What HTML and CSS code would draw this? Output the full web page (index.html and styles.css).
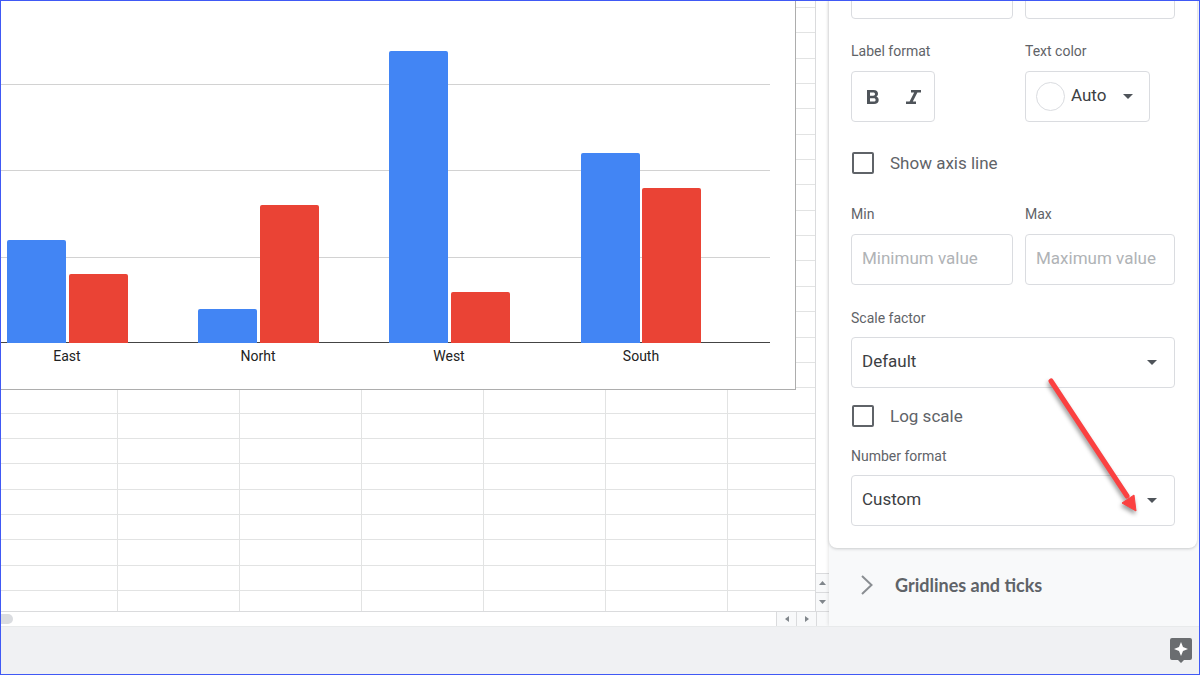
FILE: index.html
```html
<!DOCTYPE html>
<html lang="en">
<head>
<meta charset="utf-8">
<title>Chart editor</title>
<link rel="stylesheet" href="styles.css">
</head>
<body>
<div class="workspace">
  <main class="sheet">
    <div class="cells">
      <div class="rows">
        <i></i><i></i><i></i><i></i><i></i><i></i><i></i><i></i><i></i><i></i><i></i><i></i>
        <i></i><i></i><i></i><i></i><i></i><i></i><i></i><i></i><i></i><i></i><i></i><i></i>
      </div>
      <div class="chart">
        <svg class="plot" width="794" height="388" role="img" aria-label="Column chart by region">
          <g class="gridlines">
            <path d="M0 83.5H769M0 169.5H769M0 256.5H769"/>
          </g>
          <path class="axis" d="M0 341.500H769"/>
          <g class="first">
            <path d="M6 342V241q0-2 2-2h55q2 0 2 2V342z"/>
            <path d="M197 342V310q0-2 2-2h55q2 0 2 2V342z"/>
            <path d="M388 342V52q0-2 2-2h55q2 0 2 2V342z"/>
            <path d="M580 342V154q0-2 2-2h55q2 0 2 2V342z"/>
          </g>
          <g class="second">
            <path d="M68 342V275q0-2 2-2h55q2 0 2 2V342z"/>
            <path d="M259 342V206q0-2 2-2h55q2 0 2 2V342z"/>
            <path d="M450 342V293q0-2 2-2h55q2 0 2 2V342z"/>
            <path d="M641 342V189q0-2 2-2h55q2 0 2 2V342z"/>
          </g>
          <g class="categories">
            <text x="66" y="360">East</text>
            <text x="257" y="360">Norht</text>
            <text x="448" y="360">West</text>
            <text x="640" y="360">South</text>
          </g>
        </svg>
      </div>
    </div>
    <div class="vscroll">
      <button aria-label="Scroll up"><svg width="7" height="4"><path d="M0 4L3.500 0L7 4z"/></svg></button>
      <button aria-label="Scroll down"><svg width="7" height="4"><path d="M0 0L3.500 4L7 0z"/></svg></button>
    </div>
    <div class="hscroll">
      <span class="thumb"></span>
      <button aria-label="Scroll left"><svg width="4" height="6"><path d="M4 0L0 3L4 6z"/></svg></button>
      <button aria-label="Scroll right"><svg width="4" height="6"><path d="M0 0L4 3L0 6z"/></svg></button>
    </div>
    <div class="corner"></div>
  </main>

  <aside class="sidebar">
    <section class="card">
      <div class="pair">
        <select class="box" aria-label="Label font"><option></option></select>
        <select class="box" aria-label="Label font size"><option></option></select>
      </div>
      <div class="pair styles">
        <div class="field">
          <span class="label" id="lf">Label format</span>
          <div class="box format" role="group" aria-labelledby="lf">
            <button class="bold" aria-label="Bold"><svg width="12" height="14" viewBox="0 0 12 14"><path fill-rule="evenodd" d="M0 0H6.500C9.500 0 11 1.500 11 3.700C11 5 10.300 6.100 9.200 6.600C10.700 7 11.700 8.300 11.700 10C11.700 12.600 9.800 14 7 14H0zM3 2.500V5.700H6.200C7.400 5.700 8 5.100 8 4.100C8 3.100 7.400 2.500 6.200 2.500zM3 8.200V11.500H6.700C8 11.500 8.600 10.900 8.600 9.900C8.600 8.800 8 8.200 6.700 8.200z"/></svg></button>
            <button class="italic" aria-label="Italic"><svg width="15" height="14" viewBox="0 0 15 14"><path d="M5 0H15V2.400H11.400L6.800 11.600H10V14H0V11.600H3.600L8.200 2.400H5z"/></svg></button>
          </div>
        </div>
        <div class="field">
          <span class="label" id="tc">Text color</span>
          <button class="box color" aria-labelledby="tc auto"><span class="swatch"></span><span class="value" id="auto">Auto</span><svg width="10" height="5"><path d="M0 0H10L5 5z"/></svg></button>
        </div>
      </div>
      <label class="check"><input type="checkbox">Show axis line</label>
      <div class="pair range">
        <div class="field">
          <label class="label" for="min">Min</label>
          <input class="box" id="min" type="text" placeholder="Minimum value">
        </div>
        <div class="field">
          <label class="label" for="max">Max</label>
          <input class="box" id="max" type="text" placeholder="Maximum value">
        </div>
      </div>
      <div class="field scale">
        <label class="label" for="scale">Scale factor</label>
        <div class="drop"><select class="box" id="scale"><option>Default</option></select><svg width="10" height="5"><path d="M0 0H10L5 5z"/></svg></div>
      </div>
      <label class="check log"><input type="checkbox">Log scale</label>
      <div class="field number">
        <label class="label" for="number">Number format</label>
        <div class="drop"><select class="box" id="number"><option>Custom</option></select><svg width="10" height="5"><path d="M0 0H10L5 5z"/></svg></div>
      </div>
    </section>
    <button class="accordion"><svg width="12" height="20" viewBox="0 0 12 20"><path d="M1 1L10.500 10L1 19"/></svg>Gridlines and ticks</button>
    <svg class="arrow" width="110" height="150" viewBox="0 0 110 150">
      <path class="shaft" d="M12 10L88 125"/>
      <path class="head" d="M97 140L83 132L95 124z"/>
    </svg>
  </aside>
</div>
<footer class="bottom">
  <button aria-label="Explore"><svg width="22" height="25" viewBox="0 0 22 25"><path class="bubble" d="M2 0H20Q22 0 22 2V20Q22 22 20 22H14L11 25L8 22H2Q0 22 0 20V2Q0 0 2 0z"/><path class="star" d="M11 4L13 9L18 11L13 13L11 18L9 13L4 11L9 9z"/></svg></button>
</footer>
</body>
</html>
```
FILE: styles.css
```css
* { box-sizing: border-box; }

body {
  margin: 0;
  height: 100vh;
  display: flex;
  flex-direction: column;
  border: 1px solid #4059f5;
  background: #fff;
  color: #3c4043;
  font-family: Roboto, "Liberation Sans", sans-serif;
  overflow: hidden;
}

button {
  margin: 0;
  padding: 0;
  border: 0;
  background: none;
  color: inherit;
  font: inherit;
}

svg { display: block; }

.workspace {
  flex: 1;
  min-height: 0;
  display: grid;
  grid-template-columns: 1fr 370px;
  grid-template-rows: 100%;
}

/* Spreadsheet */
.sheet {
  display: grid;
  grid-template-columns: 1fr 13px;
  grid-template-rows: 1fr 14px;
  min-width: 0;
}

.cells {
  position: relative;
  overflow: hidden;
  border-right: 1px solid #dadbdd;
  border-bottom: 1px solid #dadbdd;
  background: linear-gradient(to right, #e2e3e3 1px, #fff 1px) 116px 0 / 122px 100%;
}

.rows {
  height: 100%;
  display: grid;
  grid-template-rows: 7px repeat(23, 1fr);
  padding-bottom: 20px;
}

.rows i { border-bottom: 1px solid #e2e3e3; }

.chart {
  position: absolute;
  top: 0;
  left: 0;
  border: solid #adadad;
  border-width: 0 1px 1px 0;
  background: #fff;
}

.gridlines { stroke: #d2d2d2; }
.axis { stroke: #444; }
.first { fill: #4285f4; }
.second { fill: #ea4335; }
.categories { fill: #222; font-size: 14px; text-anchor: middle; }

.vscroll {
  display: flex;
  flex-direction: column;
  justify-content: flex-end;
  border-bottom: 1px solid #dadbdd;
}

.vscroll button {
  height: 19px;
  display: grid;
  place-items: center;
  border-top: 1px solid #dadbdd;
  background: #f8f9fa;
}

.hscroll { display: flex; }
.thumb { width: 12px; height: 10px; margin-top: 2px; margin-right: auto; border-radius: 0 6px 6px 0; background: #dadce0; }

.hscroll button {
  width: 20px;
  display: grid;
  place-items: center;
  border-left: 1px solid #dadbdd;
  background: #f8f9fa;
}

.vscroll svg, .hscroll svg { fill: #80868b; }
.corner { border-left: 1px solid #dadbdd; background: #f8f9fa; }

/* Editor panel */
.sidebar {
  position: relative;
  display: flex;
  flex-direction: column;
  justify-content: flex-end;
  min-height: 0;
  background: #f8f9fa;
  box-shadow: -1px 0 3px #00000018;
  clip-path: inset(0 0 0 -6px);
}

.card {
  flex: none;
  margin-right: 2px;
  padding: 22px;
  border-radius: 8px;
  background: #fff;
  box-shadow: 0 1px 3px #3c404340;
}

.pair { display: grid; grid-template-columns: 162fr 150fr; gap: 12px; }
.styles { margin-top: 24px; justify-items: start; }
.field { display: grid; gap: 11px; min-width: 0; }
.styles .field, .range .field { gap: 12px; }

.label { color: #5f6368; font-size: 14px; line-height: 16px; }

.box {
  width: 100%;
  height: 51px;
  border: 1px solid #dadce0;
  border-radius: 4px;
  background: #fff;
  color: #3c4043;
  font-family: inherit;
  font-size: 17px;
}

select.box, input.box { margin: 0; padding: 0 10px 4px; appearance: none; }
.box::placeholder { color: #b0b3b6; opacity: 1; }

.format { width: 84px; display: grid; grid-template-columns: 1fr 1fr; padding: 0 1px; }
.format button { display: grid; place-items: center; }
.box svg, .drop svg { fill: #4f545a; }

.color { width: 125px; display: flex; align-items: center; padding: 0 16px 0 10px; }
.swatch { width: 29px; height: 29px; margin-right: 6px; border: 1px solid #dadce0; border-radius: 50%; }
.value { padding-bottom: 3px; }
.color svg { margin-left: auto; }

.check {
  display: flex;
  align-items: center;
  gap: 16px;
  height: 24px;
  margin-top: 29px;
  color: #5f6368;
  font-size: 17px;
}

.check input {
  width: 22px;
  height: 22px;
  margin: 0 0 0 1px;
  border: 2px solid #5f6368;
  border-radius: 2px;
  appearance: none;
}

.range { margin-top: 31px; }
.scale { margin-top: 25px; }
.log { margin-top: 16px; }
.number { margin-top: 20px; }

.drop { display: grid; align-items: center; }
.drop > * { grid-area: 1 / 1; }
.drop svg { justify-self: end; margin-right: 18px; pointer-events: none; }

.accordion {
  flex: none;
  height: 78px;
  display: flex;
  align-items: center;
  gap: 22px;
  padding: 0 32px 5px;
  color: #5f6368;
  font-family: Lato, Roboto, sans-serif;
  font-size: 18px;
  font-weight: 700;
}

.accordion svg { fill: none; stroke: #8a8e92; stroke-width: 2; }

.arrow {
  position: absolute;
  right: 50px;
  bottom: 105px;
  pointer-events: none;
  filter: drop-shadow(-1px 3px 2px #0006);
}

.shaft { fill: none; stroke: #fb4141; stroke-width: 5; stroke-linecap: round; }
.head { fill: #fb4141; stroke: #fb4141; }

/* Status bar */
.bottom {
  height: 48px;
  display: flex;
  justify-content: flex-end;
  align-items: center;
  padding-right: 7px;
  border-top: 1px solid #e8eaeb;
  background: #f0f1f3;
}

.bubble { fill: #6a6d70; }
.star { fill: #fff; }
```
